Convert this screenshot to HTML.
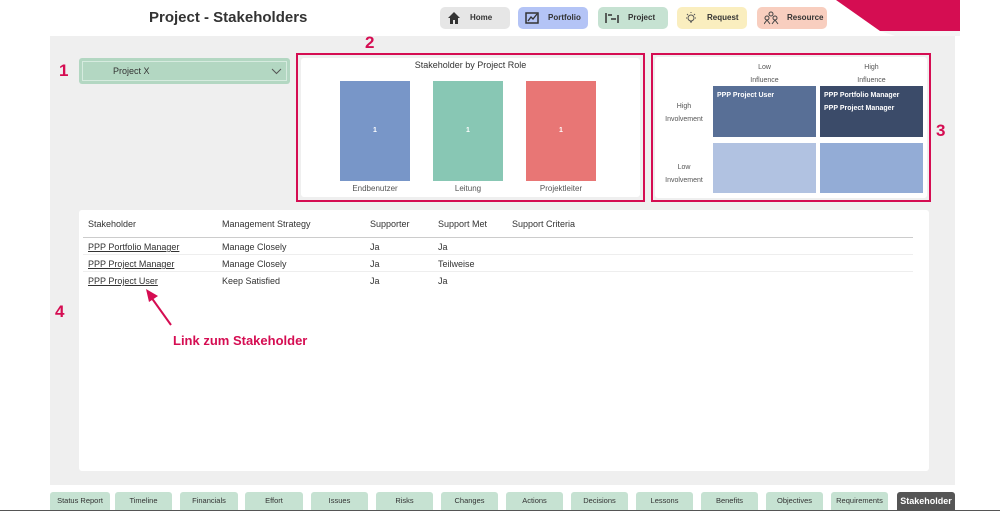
<!DOCTYPE html>
<html><head><meta charset="utf-8">
<style>
*{margin:0;padding:0;box-sizing:border-box}
body{width:1000px;height:511px;position:relative;background:#fff;font-family:"Liberation Sans",sans-serif;overflow:hidden;color:#333}
.a{position:absolute}
.title{left:149px;top:9px;font-size:15px;font-weight:bold;color:#333}
.nav{top:7px;height:22px;width:70px;border-radius:5px;font-size:8px;font-weight:bold;color:#333}
.nav span{position:absolute;left:30px;top:6px}
.nav svg{position:absolute;left:7px;top:4px}
.panel{left:50px;top:36px;width:905px;height:449px;background:#efefef}
.num{color:#d50d52;font-weight:bold;font-size:17px}
.tab{top:492px;height:18px;background:#c6e2d2;border-radius:3px 3px 0 0;font-size:7.5px;text-align:center;line-height:18px;color:#333}
.card{background:#fff;border-radius:3px}
.redbox{border:2px solid #d50d52}
.bar{color:#fff;font-size:7px;font-weight:bold;text-align:center;line-height:100px}
.lbl{font-size:8px;color:#555;text-align:center}
.q{font-size:7px;color:#fff;font-weight:bold;padding:3px 4px;line-height:13px}
.th{font-size:9px;color:#333;top:219px}
.td{font-size:9px;color:#333}
.u{text-decoration:underline}
</style></head><body>
<div class="a title">Project - Stakeholders</div>
<svg class="a" style="left:0;top:0" width="1000" height="40"><polygon points="836,0 960,0 960,31 880,31" fill="#d50d52"/><polygon points="880,31 960,31 960,36 895,36" fill="#f4f4f4"/></svg>

<div class="a nav" style="left:440px;background:#e6e6e6"><svg width="14" height="14" viewBox="0 0 14 14"><path d="M1 7 L7 1 L13 7 L11 7 L11 13 L8 13 L8 9 L6 9 L6 13 L3 13 L3 7Z" fill="#333"/></svg><span>Home</span></div>
<div class="a nav" style="left:518px;background:#b4c4f6"><svg width="15" height="14" viewBox="0 0 15 14"><rect x="1" y="2" width="12" height="10" fill="none" stroke="#333" stroke-width="1.5"/><path d="M3 10 L6 6 L8 8 L12 3" stroke="#333" fill="none" stroke-width="1.3"/></svg><span>Portfolio</span></div>
<div class="a nav" style="left:598px;background:#c6e2d2"><svg width="15" height="14" viewBox="0 0 15 14"><path d="M1 2V12M13 4V12M3 4H7M6 8H11" stroke="#333" stroke-width="1.5" fill="none"/></svg><span>Project</span></div>
<div class="a nav" style="left:677px;background:#faeebf"><svg width="15" height="14" viewBox="0 0 15 14"><circle cx="7" cy="7" r="3" fill="none" stroke="#555"/><path d="M7 1V2M2 7H3M11 7H12M3 3L4 4M11 3L10 4M6 11H8" stroke="#555"/></svg><span>Request</span></div>
<div class="a nav" style="left:757px;background:#f8cebf"><svg width="15" height="14" viewBox="0 0 15 14"><circle cx="7" cy="3" r="2" fill="none" stroke="#444"/><circle cx="3" cy="7" r="2" fill="none" stroke="#444"/><circle cx="11" cy="7" r="2" fill="none" stroke="#444"/><path d="M0 13L3 9L6 13M8 13L11 9L14 13" stroke="#444" fill="none"/></svg><span>Resource</span></div>

<div class="a panel"></div>
<div class="a num" style="left:59px;top:61px">1</div>
<div class="a num" style="left:365px;top:33px">2</div>
<div class="a num" style="left:936px;top:121px">3</div>
<div class="a num" style="left:55px;top:302px">4</div>

<div class="a" style="left:79px;top:58px;width:211px;height:26px;background:#b3d7c2;border-radius:3px"><div class="a" style="left:3px;top:3px;width:205px;height:20px;border:1px solid #d6ebdf"></div><div class="a" style="left:34px;top:8px;font-size:9px;color:#333">Project X</div><svg class="a" style="left:192px;top:10px" width="11" height="7"><path d="M1 1L5.5 5.5L10 1" stroke="#555" fill="none"/></svg></div>

<div class="a redbox" style="left:296px;top:53px;width:349px;height:149px"></div>
<div class="a card" style="left:301px;top:58px;width:339px;height:139px"></div>
<div class="a" style="left:296px;top:60px;width:349px;text-align:center;font-size:9px;color:#333">Stakeholder by Project Role</div>
<div class="a bar" style="left:340px;top:81px;width:70px;height:100px;background:#7896c8">1</div>
<div class="a bar" style="left:433px;top:81px;width:70px;height:100px;background:#88c7b4">1</div>
<div class="a bar" style="left:526px;top:81px;width:70px;height:100px;background:#e87675">1</div>
<div class="a lbl" style="left:330px;top:184px;width:90px">Endbenutzer</div>
<div class="a lbl" style="left:423px;top:184px;width:90px">Leitung</div>
<div class="a lbl" style="left:516px;top:184px;width:90px">Projektleiter</div>

<div class="a redbox" style="left:651px;top:53px;width:280px;height:149px"></div>
<div class="a card" style="left:655px;top:57px;width:272px;height:141px"></div>
<div class="a lbl" style="left:713px;top:61px;width:103px;line-height:13px;font-size:7px">Low<br>Influence</div>
<div class="a lbl" style="left:820px;top:61px;width:103px;line-height:13px;font-size:7px">High<br>Influence</div>
<div class="a lbl" style="left:655px;top:100px;width:58px;line-height:13px;font-size:7px">High<br>Involvement</div>
<div class="a lbl" style="left:655px;top:161px;width:58px;line-height:13px;font-size:7px">Low<br>Involvement</div>
<div class="a q" style="left:713px;top:86px;width:103px;height:51px;background:#586f96">PPP Project User</div>
<div class="a q" style="left:820px;top:86px;width:103px;height:51px;background:#3b4b69">PPP Portfolio Manager<br>PPP Project Manager</div>
<div class="a" style="left:713px;top:143px;width:103px;height:50px;background:#b1c2e1"></div>
<div class="a" style="left:820px;top:143px;width:103px;height:50px;background:#93acd6"></div>

<div class="a card" style="left:79px;top:210px;width:850px;height:261px"></div>
<div class="a th" style="left:88px">Stakeholder</div>
<div class="a th" style="left:222px">Management Strategy</div>
<div class="a th" style="left:370px">Supporter</div>
<div class="a th" style="left:438px">Support Met</div>
<div class="a th" style="left:512px">Support Criteria</div>
<div class="a" style="left:83px;top:237px;width:830px;height:1px;background:#ccc"></div>
<div class="a" style="left:83px;top:254px;width:830px;height:1px;background:#eee"></div>
<div class="a" style="left:83px;top:271px;width:830px;height:1px;background:#eee"></div>
<div class="a td u" style="left:88px;top:242px">PPP Portfolio Manager</div>
<div class="a td" style="left:222px;top:242px">Manage Closely</div>
<div class="a td" style="left:370px;top:242px">Ja</div>
<div class="a td" style="left:438px;top:242px">Ja</div>
<div class="a td u" style="left:88px;top:259px">PPP Project Manager</div>
<div class="a td" style="left:222px;top:259px">Manage Closely</div>
<div class="a td" style="left:370px;top:259px">Ja</div>
<div class="a td" style="left:438px;top:259px">Teilweise</div>
<div class="a td u" style="left:88px;top:276px">PPP Project User</div>
<div class="a td" style="left:222px;top:276px">Keep Satisfied</div>
<div class="a td" style="left:370px;top:276px">Ja</div>
<div class="a td" style="left:438px;top:276px">Ja</div>
<svg class="a" style="left:140px;top:285px" width="40" height="45"><path d="M31 40L11 12" stroke="#d50d52" stroke-width="2"/><polygon points="6,4 18,11 9,17" fill="#d50d52"/></svg>
<div class="a" style="left:173px;top:333px;font-size:13px;font-weight:bold;color:#d50d52">Link zum Stakeholder</div>

<div class="a tab" style="left:50px;width:60px">Status Report</div>
<div class="a tab" style="left:115px;width:57px">Timeline</div>
<div class="a tab" style="left:180px;width:58px">Financials</div>
<div class="a tab" style="left:245px;width:58px">Effort</div>
<div class="a tab" style="left:311px;width:57px">Issues</div>
<div class="a tab" style="left:376px;width:57px">Risks</div>
<div class="a tab" style="left:441px;width:57px">Changes</div>
<div class="a tab" style="left:506px;width:57px">Actions</div>
<div class="a tab" style="left:571px;width:57px">Decisions</div>
<div class="a tab" style="left:636px;width:57px">Lessons</div>
<div class="a tab" style="left:701px;width:57px">Benefits</div>
<div class="a tab" style="left:766px;width:57px">Objectives</div>
<div class="a tab" style="left:831px;width:57px">Requirements</div>
<div class="a tab" style="left:897px;width:58px;background:#555;color:#fff;font-size:9px;font-weight:bold">Stakeholder</div>
<div class="a" style="left:0;top:510px;width:1000px;height:1px;background:#555"></div>
</body></html>
